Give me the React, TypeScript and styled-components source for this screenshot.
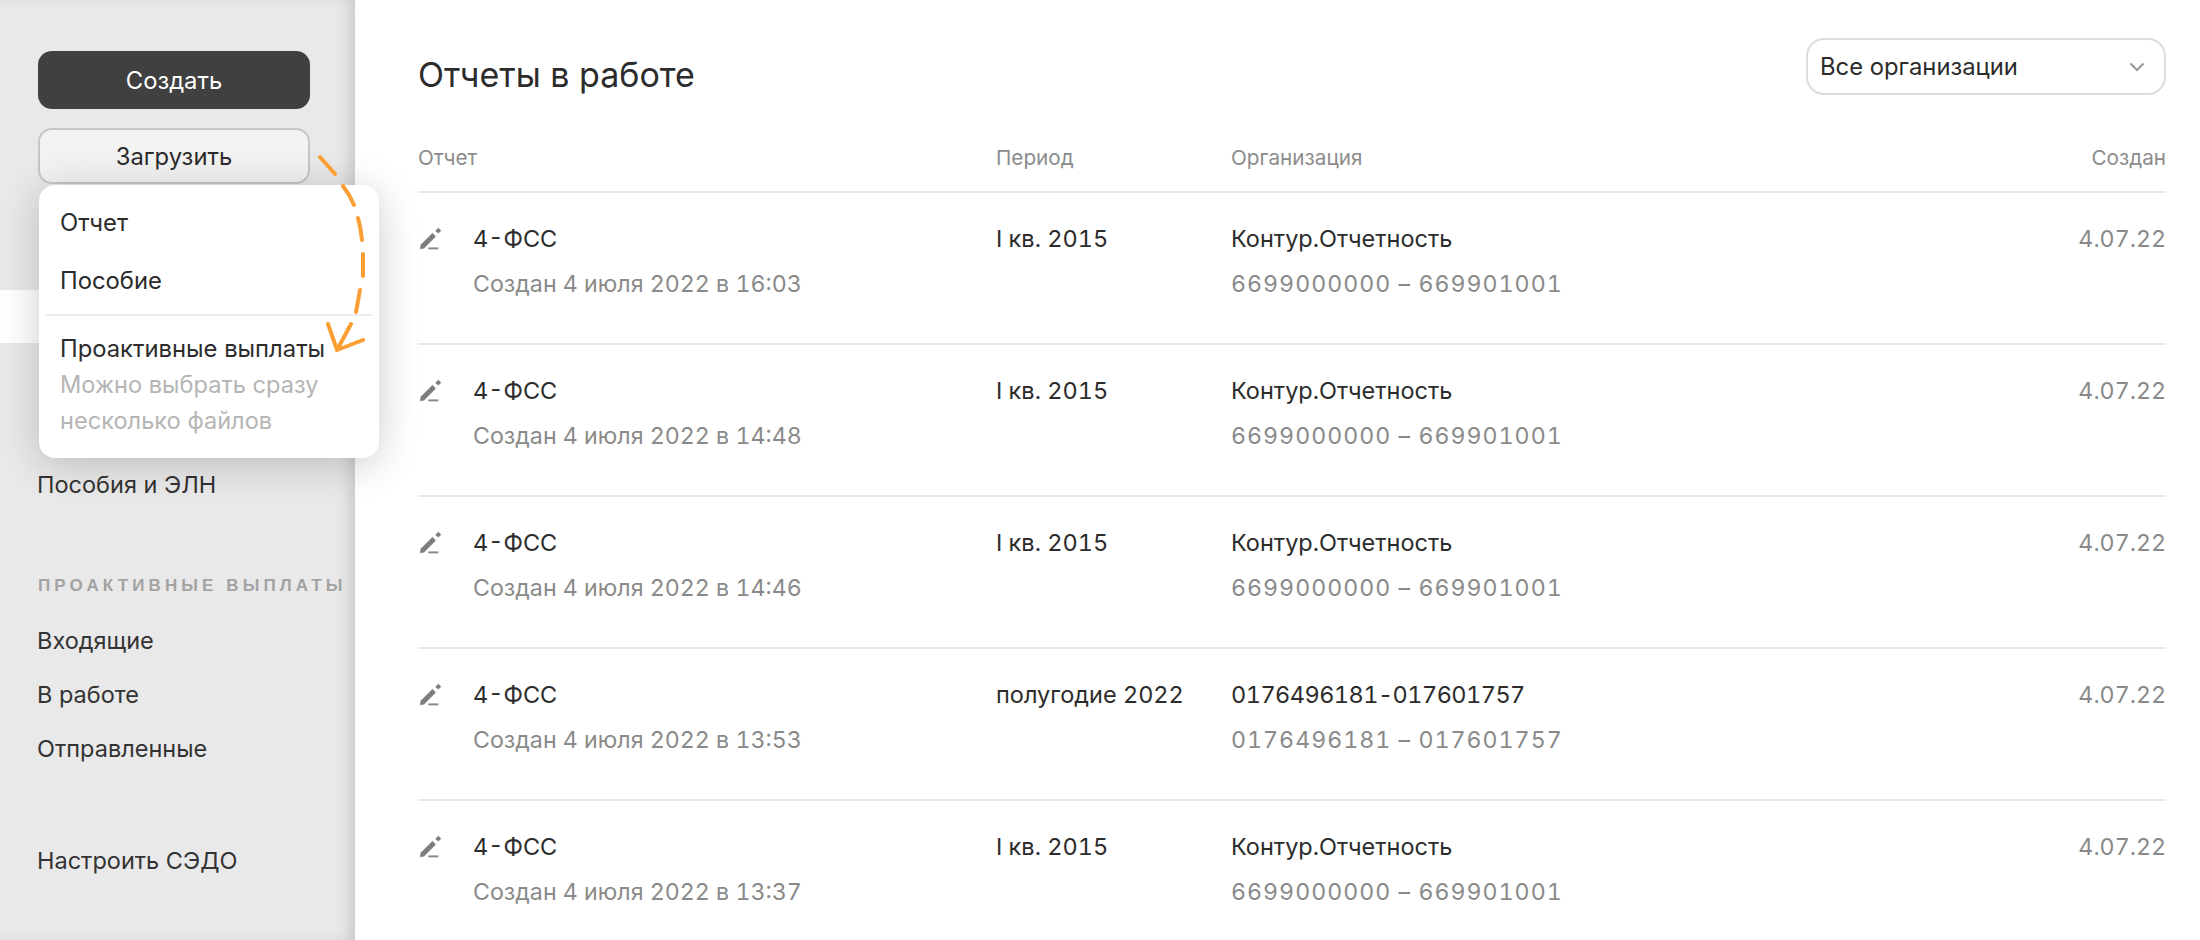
import React from 'react';
import styled, { createGlobalStyle } from 'styled-components';

const GlobalStyle = createGlobalStyle`
  html, body {
    margin: 0;
    padding: 0;
    background: #fff;
    overflow: hidden;
  }
  * { box-sizing: border-box; }
`;

const Page = styled.div`
  display: flex;
  width: 2200px;
  height: 940px;
  overflow: hidden;
  font-family: Inter, "Noto Sans", sans-serif;
  color: #2c2c2c;
`;

const Sidebar = styled.aside`
  position: relative;
  flex: 0 0 355px;
  height: 940px;
  padding-top: 51px;
  background: #e9e9e9;
  box-shadow: inset -10px 0 16px -6px rgba(0, 0, 0, 0.16);
`;

const Buttons = styled.div`
  display: flex;
  flex-direction: column;
  gap: 19px;
  padding: 0 45px 0 38px;
`;

const DarkButton = styled.div`
  display: flex;
  align-items: center;
  justify-content: center;
  height: 58px;
  border-radius: 14px;
  background: #404040;
  color: #fff;
  font-size: 23.8px;
`;

const LightButton = styled.div`
  display: flex;
  align-items: center;
  justify-content: center;
  height: 56px;
  border: 2px solid #c6c6c6;
  border-radius: 14px;
  background: #f2f2f2;
  color: #2c2c2c;
  font-size: 23.8px;
`;

const ActiveRow = styled.div`
  height: 53px;
  margin-top: 106px;
  background: #fff;
`;

const NavItem = styled.div<{ $top?: number }>`
  height: 54px;
  margin-top: ${(p) => p.$top ?? 0}px;
  padding-left: 37px;
  font-size: 23.5px;
  line-height: 54px;
  color: #333;
`;

const NavLabel = styled.div`
  margin-top: 64px;
  margin-bottom: 18px;
  padding-left: 38px;
  font-size: 17px;
  line-height: 20px;
  font-weight: 700;
  letter-spacing: 4.1px;
  white-space: nowrap;
  color: #a3a3a3;
  font-family: "Liberation Sans", sans-serif;
`;

const Menu = styled.div`
  position: absolute;
  left: 39px;
  top: 185px;
  width: 340px;
  height: 273px;
  padding-top: 9px;
  border-radius: 16px;
  background: #fff;
  box-shadow: 0 6px 40px rgba(0, 0, 0, 0.2);
`;

const MenuItem = styled.div`
  height: 58px;
  padding-left: 21px;
  font-size: 23.8px;
  line-height: 58px;
  color: #2c2c2c;
`;

const MenuDivider = styled.div`
  height: 2px;
  margin: 4px 7px 0;
  background: #ececec;
`;

const MenuTitle = styled.div`
  margin-top: 15px;
  padding-left: 21px;
  font-size: 23.8px;
  line-height: 36px;
  color: #2c2c2c;
`;

const MenuHint = styled.div`
  padding-left: 21px;
  font-size: 23.6px;
  line-height: 36px;
  color: #b5b5b5;
`;

const Arrow = styled.svg`
  position: absolute;
  left: 0;
  top: 0;
  width: 400px;
  height: 400px;
  pointer-events: none;
`;

const Main = styled.main`
  flex: 1;
  min-width: 0;
  padding: 38px 34px 0 63px;
`;

const Header = styled.div`
  display: flex;
  align-items: center;
  justify-content: space-between;
  height: 57px;
`;

const Title = styled.h1`
  margin: 0;
  padding-top: 15px;
  font-size: 34px;
  font-weight: 400;
  color: #2c2c2c;
`;

const Select = styled.div`
  display: flex;
  align-items: center;
  justify-content: space-between;
  width: 360px;
  height: 57px;
  padding: 0 19px 0 12px;
  border: 2px solid #dcdcdc;
  border-radius: 18px;
  font-size: 23.8px;
  color: #2c2c2c;
`;

const TableRow = styled.div<{ $head?: boolean }>`
  display: grid;
  grid-template-columns: 578px 235px 1fr auto;
  height: ${(p) => (p.$head ? 98 : 152)}px;
  padding-top: ${(p) => (p.$head ? 48 : 29)}px;
  border-bottom: 2px solid #e8e8e8;
  font-variant-numeric: tabular-nums;
`;

const HeadCell = styled.div<{ $right?: boolean }>`
  font-size: 20.7px;
  line-height: 30px;
  color: #8c8c8c;
  text-align: ${(p) => (p.$right ? 'right' : 'left')};
`;

const NameCell = styled.div`
  display: flex;
  gap: 24px;
`;

const IconBox = styled.svg`
  flex: 0 0 31px;
  width: 31px;
  height: 34px;
`;

const Primary = styled.div<{ $spacing?: number }>`
  font-size: 23.5px;
  line-height: 34px;
  letter-spacing: ${(p) => p.$spacing ?? 0}px;
  color: #2c2c2c;
`;

const Secondary = styled.div<{ $spacing?: number }>`
  margin-top: 11px;
  font-size: 23.2px;
  line-height: 34px;
  letter-spacing: ${(p) => p.$spacing ?? 0}px;
  color: #8a8a8a;
`;

const DateCell = styled.div`
  font-size: 23.2px;
  line-height: 34px;
  color: #8a8a8a;
  text-align: right;
`;

type Report = { created: string; period: string; org: string; reg: string; orgSpacing?: number };

const reports: Report[] = [
  { created: '16:03', period: 'I кв. 2015', org: 'Контур.Отчетность', reg: '6699000000 – 669901001' },
  { created: '14:48', period: 'I кв. 2015', org: 'Контур.Отчетность', reg: '6699000000 – 669901001' },
  { created: '14:46', period: 'I кв. 2015', org: 'Контур.Отчетность', reg: '6699000000 – 669901001' },
  { created: '13:53', period: 'полугодие 2022', org: '0176496181-017601757', reg: '0176496181 – 017601757', orgSpacing: -0.55 },
  { created: '13:37', period: 'I кв. 2015', org: 'Контур.Отчетность', reg: '6699000000 – 669901001' },
];

const PencilIcon = () => (
  <IconBox viewBox="0 0 31 34" fill="none">
    <path d="M2 27 L2.6 22.8 L14.5 11 L17.8 14.4 L6 26.4 Z" fill="#7d7d7d" />
    <path d="M20.3 5.8 L23.2 8.7 L20.3 11.6 L17.4 8.7 Z" fill="#7d7d7d" />
    <path d="M10.3 26.4 H20.3" stroke="#8a8a8a" strokeWidth="2" />
  </IconBox>
);

const ChevronIcon = () => (
  <svg width="16" height="10" viewBox="0 0 16 10" fill="none">
    <path d="M1.5 1.5 L8 8 L14.5 1.5" stroke="#9a9a9a" strokeWidth="2.2" />
  </svg>
);

export default function App() {
  return (
    <>
      <GlobalStyle />
      <Page>
        <Sidebar>
          <Buttons>
            <DarkButton>Создать</DarkButton>
            <LightButton>Загрузить</LightButton>
          </Buttons>
          <ActiveRow />
          <NavItem $top={115}>Пособия и ЭЛН</NavItem>
          <NavLabel>ПРОАКТИВНЫЕ ВЫПЛАТЫ</NavLabel>
          <NavItem>Входящие</NavItem>
          <NavItem>В работе</NavItem>
          <NavItem>Отправленные</NavItem>
          <NavItem $top={58}>Настроить СЭДО</NavItem>
          <Menu>
            <MenuItem>Отчет</MenuItem>
            <MenuItem>Пособие</MenuItem>
            <MenuDivider />
            <MenuTitle>Проактивные выплаты</MenuTitle>
            <MenuHint>
              Можно выбрать сразу
              <br />
              несколько файлов
            </MenuHint>
          </Menu>
          <Arrow viewBox="0 0 400 400" fill="none">
            <path
              d="M320 157 L335 174 M343 186 Q350 195 354 205 M358 218 Q361 229 362 240 M363 254 L363 276 M360 290 L356 312 M351 324 L337 350 M328 324 L337 350 L363 340"
              stroke="#fb9f35"
              strokeWidth="4"
              strokeLinecap="round"
              strokeLinejoin="miter"
            />
          </Arrow>
        </Sidebar>
        <Main>
          <Header>
            <Title>Отчеты в работе</Title>
            <Select>
              Все организации
              <ChevronIcon />
            </Select>
          </Header>
          <TableRow $head>
            <HeadCell>Отчет</HeadCell>
            <HeadCell>Период</HeadCell>
            <HeadCell>Организация</HeadCell>
            <HeadCell $right>Создан</HeadCell>
          </TableRow>
          {reports.map((r) => (
            <TableRow key={r.created}>
              <NameCell>
                <PencilIcon />
                <div>
                  <Primary>4-ФСС</Primary>
                  <Secondary>Создан 4 июля 2022 в {r.created}</Secondary>
                </div>
              </NameCell>
              <Primary>{r.period}</Primary>
              <div>
                <Primary $spacing={r.orgSpacing}>{r.org}</Primary>
                <Secondary $spacing={1}>{r.reg}</Secondary>
              </div>
              <DateCell>4.07.22</DateCell>
            </TableRow>
          ))}
        </Main>
      </Page>
    </>
  );
}
